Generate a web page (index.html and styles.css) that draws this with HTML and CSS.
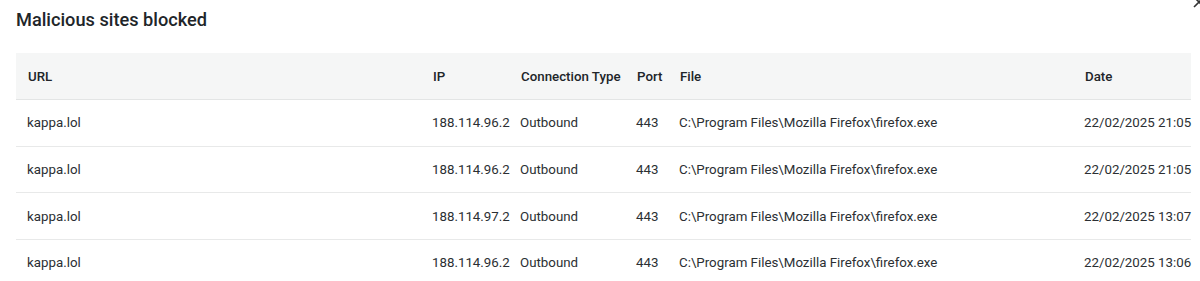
FILE: index.html
```html
<!DOCTYPE html>
<html lang="en">
<head>
<meta charset="utf-8">
<title>Malicious sites blocked</title>
<link rel="stylesheet" href="styles.css">
</head>
<body>
<div class="dialog">
  <button class="close" aria-label="Close">
    <svg width="12" height="12" viewBox="0 0 12 12"><path d="M1 1L11 11M11 1L1 11" stroke="#333" stroke-width="1.6" fill="none"/></svg>
  </button>
  <h1 class="title">Malicious sites blocked</h1>
  <table class="grid">
    <colgroup>
      <col class="c-url"><col class="c-ip"><col class="c-type"><col class="c-port"><col class="c-file"><col class="c-date">
    </colgroup>
    <thead>
      <tr><th>URL</th><th>IP</th><th>Connection Type</th><th>Port</th><th>File</th><th>Date</th></tr>
    </thead>
    <tbody>
      <tr><td>kappa.lol</td><td>188.114.96.2</td><td>Outbound</td><td>443</td><td>C:\Program Files\Mozilla Firefox\firefox.exe</td><td>22/02/2025 21:05</td></tr>
      <tr><td>kappa.lol</td><td>188.114.96.2</td><td>Outbound</td><td>443</td><td>C:\Program Files\Mozilla Firefox\firefox.exe</td><td>22/02/2025 21:05</td></tr>
      <tr><td>kappa.lol</td><td>188.114.97.2</td><td>Outbound</td><td>443</td><td>C:\Program Files\Mozilla Firefox\firefox.exe</td><td>22/02/2025 13:07</td></tr>
      <tr><td>kappa.lol</td><td>188.114.96.2</td><td>Outbound</td><td>443</td><td>C:\Program Files\Mozilla Firefox\firefox.exe</td><td>22/02/2025 13:06</td></tr>
    </tbody>
  </table>
</div>
</body>
</html>
```
FILE: styles.css
```css
html, body {
  margin: 0;
  padding: 0;
  background: #ffffff;
}
body {
  font-family: Roboto, "Liberation Sans", Arial, sans-serif;
  color: #212529;
  overflow: hidden;
}
.dialog {
  position: relative;
  padding: 0 9px 0 16px;
}
.close {
  position: absolute;
  top: -5px;
  right: -6px;
  width: 14px;
  height: 14px;
  padding: 0;
  border: 0;
  background: none;
  display: flex;
  align-items: center;
  justify-content: center;
}
.title {
  margin: 0;
  padding: 9px 0 0;
  height: 53px;
  box-sizing: border-box;
  font-size: 18.2px;
  font-weight: 500;
  line-height: 22px;
  color: #212529;
}
.grid {
  width: 1175px;
  border-collapse: collapse;
  table-layout: fixed;
  font-size: 13.3px;
}
.c-url { width: 405px; }
.c-ip { width: 88px; }
.c-type { width: 116px; }
.c-port { width: 43px; }
.c-file { width: 405px; }
.c-date { width: 118px; }
.grid th {
  background: #f5f6f6;
  height: 46px;
  padding: 0 0 0 12px;
  text-align: left;
  font-weight: 500;
  color: #212529;
  border-bottom: 1px solid #e3e5e5;
  white-space: nowrap;
}
.grid td {
  height: 45.67px;
  padding: 0 0 0 11px;
  text-align: left;
  color: #2b2f33;
  border-bottom: 1px solid #e8e9e9;
  white-space: nowrap;
  overflow: visible;
}
```
